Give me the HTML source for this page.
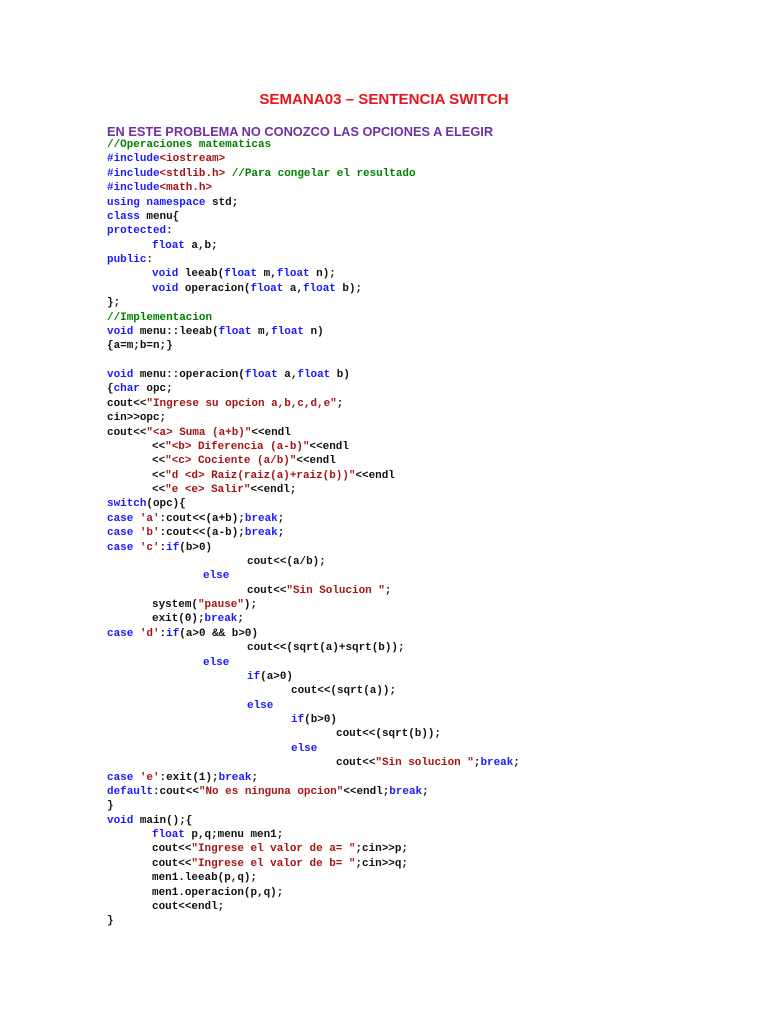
<!DOCTYPE html>
<html><head><meta charset="utf-8"><style>
body{margin:0;background:#fff;width:768px;height:1024px;position:relative;overflow:hidden}
.t{position:absolute;left:0;width:768px;text-align:center;top:91px;font:bold 15.1px "Liberation Sans",sans-serif;color:#e8141b}
.h{position:absolute;left:107px;top:124px;font:bold 12.8px "Liberation Sans",sans-serif;color:#7030a0}
.c{position:absolute;left:107px;top:138px;font:bold 10.95px/14.39px "Liberation Mono",monospace;color:#111}
.c div{height:14.39px;position:relative;white-space:pre}
.k{color:#1a1aff}.s{color:#a31515}.g{color:#008000}
.i1{left:45px}.i2{left:96px}.i3{left:140px}.i4{left:184px}.i5{left:229px}
</style></head><body>
<div class="t">SEMANA03 – SENTENCIA SWITCH</div>
<div class="h">EN ESTE PROBLEMA NO CONOZCO LAS OPCIONES A ELEGIR</div>
<div class="c">
<div class="g">//Operaciones matematicas</div>
<div><span class="k">#include</span><span class="s">&lt;iostream&gt;</span></div>
<div><span class="k">#include</span><span class="s">&lt;stdlib.h&gt;</span> <span class="g">//Para congelar el resultado</span></div>
<div><span class="k">#include</span><span class="s">&lt;math.h&gt;</span></div>
<div><span class="k">using namespace</span> std;</div>
<div><span class="k">class</span> menu{</div>
<div><span class="k">protected</span>:</div>
<div class="i1"><span class="k">float</span> a,b;</div>
<div><span class="k">public</span>:</div>
<div class="i1"><span class="k">void</span> leeab(<span class="k">float</span> m,<span class="k">float</span> n);</div>
<div class="i1"><span class="k">void</span> operacion(<span class="k">float</span> a,<span class="k">float</span> b);</div>
<div>};</div>
<div class="g">//Implementacion</div>
<div><span class="k">void</span> menu::leeab(<span class="k">float</span> m,<span class="k">float</span> n)</div>
<div>{a=m;b=n;}</div>
<div> </div>
<div><span class="k">void</span> menu::operacion(<span class="k">float</span> a,<span class="k">float</span> b)</div>
<div>{<span class="k">char</span> opc;</div>
<div>cout&lt;&lt;<span class="s">"Ingrese su opcion a,b,c,d,e"</span>;</div>
<div>cin&gt;&gt;opc;</div>
<div>cout&lt;&lt;<span class="s">"&lt;a&gt; Suma (a+b)"</span>&lt;&lt;endl</div>
<div class="i1">&lt;&lt;<span class="s">"&lt;b&gt; Diferencia (a-b)"</span>&lt;&lt;endl</div>
<div class="i1">&lt;&lt;<span class="s">"&lt;c&gt; Cociente (a/b)"</span>&lt;&lt;endl</div>
<div class="i1">&lt;&lt;<span class="s">"d &lt;d&gt; Raiz(raiz(a)+raiz(b))"</span>&lt;&lt;endl</div>
<div class="i1">&lt;&lt;<span class="s">"e &lt;e&gt; Salir"</span>&lt;&lt;endl;</div>
<div><span class="k">switch</span>(opc){</div>
<div><span class="k">case</span> <span class="s">'a'</span>:cout&lt;&lt;(a+b);<span class="k">break</span>;</div>
<div><span class="k">case</span> <span class="s">'b'</span>:cout&lt;&lt;(a-b);<span class="k">break</span>;</div>
<div><span class="k">case</span> <span class="s">'c'</span>:<span class="k">if</span>(b&gt;0)</div>
<div class="i3">cout&lt;&lt;(a/b);</div>
<div class="i2"><span class="k">else</span></div>
<div class="i3">cout&lt;&lt;<span class="s">"Sin Solucion "</span>;</div>
<div class="i1">system(<span class="s">"pause"</span>);</div>
<div class="i1">exit(0);<span class="k">break</span>;</div>
<div><span class="k">case</span> <span class="s">'d'</span>:<span class="k">if</span>(a&gt;0 &amp;&amp; b&gt;0)</div>
<div class="i3">cout&lt;&lt;(sqrt(a)+sqrt(b));</div>
<div class="i2"><span class="k">else</span></div>
<div class="i3"><span class="k">if</span>(a&gt;0)</div>
<div class="i4">cout&lt;&lt;(sqrt(a));</div>
<div class="i3"><span class="k">else</span></div>
<div class="i4"><span class="k">if</span>(b&gt;0)</div>
<div class="i5">cout&lt;&lt;(sqrt(b));</div>
<div class="i4"><span class="k">else</span></div>
<div class="i5">cout&lt;&lt;<span class="s">"Sin solucion "</span>;<span class="k">break</span>;</div>
<div><span class="k">case</span> <span class="s">'e'</span>:exit(1);<span class="k">break</span>;</div>
<div><span class="k">default</span>:cout&lt;&lt;<span class="s">"No es ninguna opcion"</span>&lt;&lt;endl;<span class="k">break</span>;</div>
<div>}</div>
<div><span class="k">void</span> main();{</div>
<div class="i1"><span class="k">float</span> p,q;menu men1;</div>
<div class="i1">cout&lt;&lt;<span class="s">"Ingrese el valor de a= "</span>;cin&gt;&gt;p;</div>
<div class="i1">cout&lt;&lt;<span class="s">"Ingrese el valor de b= "</span>;cin&gt;&gt;q;</div>
<div class="i1">men1.leeab(p,q);</div>
<div class="i1">men1.operacion(p,q);</div>
<div class="i1">cout&lt;&lt;endl;</div>
<div>}</div>
</div>
</body></html>
